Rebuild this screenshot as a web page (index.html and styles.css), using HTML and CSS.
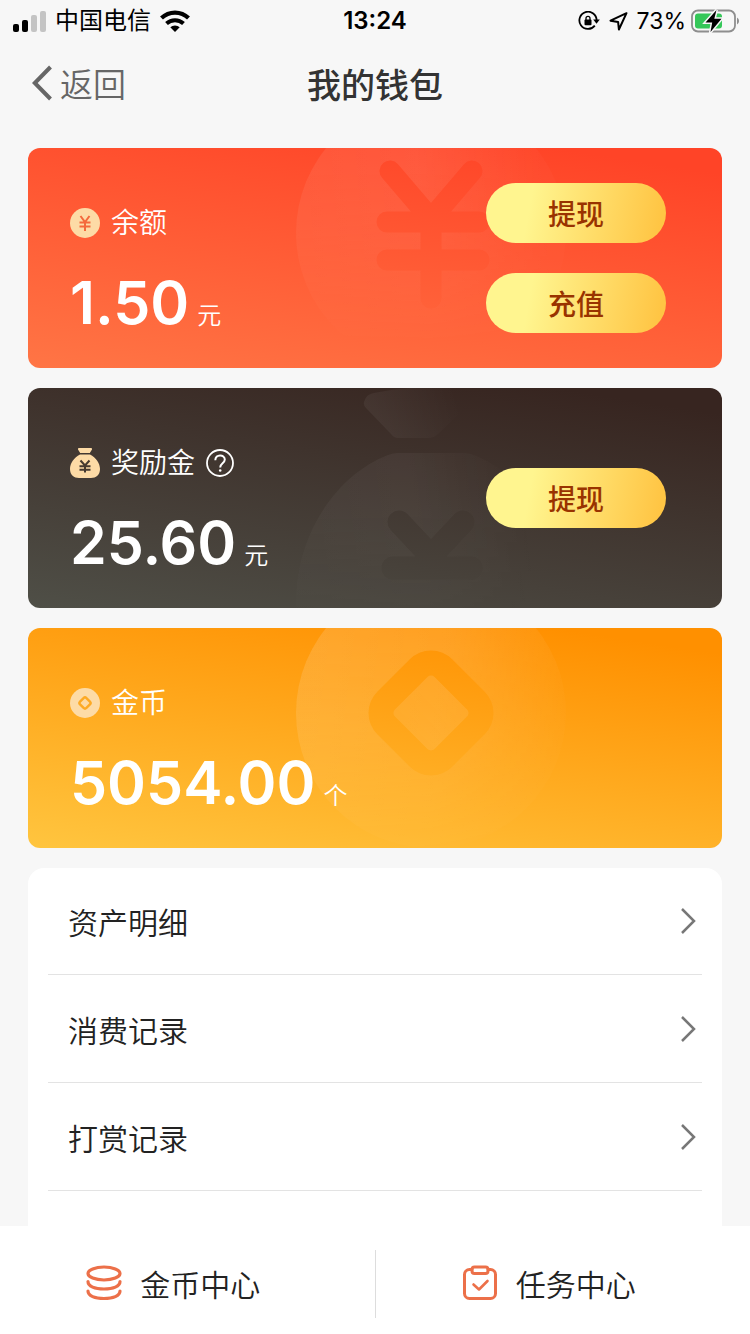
FILE: index.html
```html
<!DOCTYPE html>
<html lang="zh-CN">
<head>
<meta charset="utf-8">
<meta name="viewport" content="width=device-width, initial-scale=1">
<title>我的钱包</title>
<link rel="stylesheet" href="styles.css">
</head>
<body>
<div class="app">
  <div class="status">
    <div class="status-side">
      <svg class="signal" width="34" height="22" viewBox="0 0 34 22" aria-hidden="true">
        <rect x="1" y="14" width="6" height="8" rx="2"/>
        <rect x="10" y="10" width="6" height="12" rx="2"/>
        <rect x="19" y="5" width="6" height="17" rx="2" fill="#c4c4c4"/>
        <rect x="28" y="1" width="6" height="21" rx="2" fill="#c4c4c4"/>
      </svg>
      <span class="carrier">中国电信</span>
      <svg class="wifi" width="30" height="22" viewBox="0 0 30 22" fill="none" stroke="#000" aria-hidden="true">
        <path d="M1.500 8a19.500 19.500 0 0 1 27 0" stroke-width="4.200"/>
        <path d="M6.500 13.500a12.500 12.500 0 0 1 17 0" stroke-width="4"/>
        <path d="M10.300 17.300a6.800 6.800 0 0 1 9.400 0L15 22z" fill="#000" stroke="none"/>
      </svg>
    </div>
    <time class="clock">13:24</time>
    <div class="status-side status-right">
      <svg width="22" height="20" viewBox="0 0 22 20" aria-hidden="true">
        <path d="M16.800 14.600a8.600 8.600 0 1 1 1.800-5.100" fill="none" stroke="#000" stroke-width="1.800"/>
        <path d="M15.200 8.600h6.600l-3.300 4.200z"/>
        <rect x="6.500" y="8.500" width="7" height="5.800" rx="1"/>
        <path d="M8 9V7.300a2 2 0 0 1 4 0V9" fill="none" stroke="#000" stroke-width="1.300"/>
      </svg>
      <svg class="locate" width="19" height="19" viewBox="0 0 19 19" fill="none" stroke="#000" stroke-width="2" stroke-linejoin="round" aria-hidden="true">
        <path d="M17.500 1.200 1.500 8.700l7.600 1.200.8 7.600z"/>
      </svg>
      <span class="percent">73%</span>
      <svg class="battery" width="49" height="24" viewBox="0 0 49 24" aria-hidden="true">
        <rect x="1" y="1.500" width="43" height="21" rx="6" fill="none" stroke="#8e8e8e" stroke-width="1.800"/>
        <rect x="4" y="4.500" width="27" height="15" rx="3" fill="#35c759"/>
        <path d="M46 8.500a4 4 0 0 1 0 7z" fill="#8e8e8e"/>
        <path class="bolt" d="M25.500 1 14.500 13.500h6.700L19.500 23 30.500 9.800h-7.200z"/>
      </svg>
    </div>
  </div>

  <header class="nav">
    <button class="back" type="button">
      <svg width="20" height="36" viewBox="0 0 20 36" fill="none" stroke="#666" stroke-width="4" aria-hidden="true"><path d="M18.500 2 2.800 18l15.700 16"/></svg>
      <span>返回</span>
    </button>
    <h1 class="title">我的钱包</h1>
  </header>

  <main class="content">
    <section class="card card-balance">
      <svg class="art" viewBox="0 0 694 220" aria-hidden="true">
        <defs>
          <linearGradient id="fade" gradientUnits="userSpaceOnUse" x1="270" y1="100" x2="520" y2="80">
            <stop offset="0" stop-color="#fff" stop-opacity=".07"/>
            <stop offset=".5" stop-color="#fff" stop-opacity=".09"/>
            <stop offset="1" stop-color="#fff" stop-opacity=".02"/>
          </linearGradient>
          <linearGradient id="fade-low" gradientUnits="userSpaceOnUse" x1="340" y1="20" x2="340" y2="200">
            <stop offset="0" stop-color="#fff"/>
            <stop offset=".3" stop-color="#fff" stop-opacity=".8"/>
            <stop offset="1" stop-color="#fff" stop-opacity="0"/>
          </linearGradient>
          <mask id="yen-hole" maskUnits="userSpaceOnUse" x="0" y="-60" width="694" height="300">
            <rect y="-60" width="694" height="300" fill="url(#fade-low)"/>
            <path d="m362 23 41 48 41-48M359 74h92M359 112h92M403 74v76" fill="none" stroke="#000" stroke-width="21" stroke-linecap="round" stroke-linejoin="round"/>
          </mask>
        </defs>
        <circle cx="403" cy="85" r="135" fill="url(#fade)" mask="url(#yen-hole)"/>
      </svg>
      <div class="info">
        <h2 class="label">
          <svg width="30" height="30" viewBox="0 0 30 30" aria-hidden="true">
            <circle cx="15" cy="15" r="15" fill="#fddba6"/>
            <path d="m10.500 8 4.500 6 4.500-6M9.500 14.500h11M9.500 18.500h11M15 14v9" fill="none" stroke="#f4693c" stroke-width="2"/>
          </svg>
          余额
        </h2>
        <p class="amount">1.50<span class="unit">元</span></p>
      </div>
      <div class="actions">
        <button class="pill" type="button">提现</button>
        <button class="pill" type="button">充值</button>
      </div>
    </section>

    <section class="card card-bonus">
      <svg class="art" viewBox="0 0 694 220" aria-hidden="true">
        <defs>
          <linearGradient id="bag-fade" gradientUnits="userSpaceOnUse" x1="270" y1="150" x2="500" y2="120">
            <stop offset="0" stop-color="#fff" stop-opacity=".03"/>
            <stop offset=".5" stop-color="#fff" stop-opacity=".045"/>
            <stop offset="1" stop-color="#fff" stop-opacity="0"/>
          </linearGradient>
          <linearGradient id="knot-fade" gradientUnits="userSpaceOnUse" x1="345" y1="35" x2="430" y2="10">
            <stop offset="0" stop-color="#fff" stop-opacity=".05"/>
            <stop offset="1" stop-color="#fff" stop-opacity="0"/>
          </linearGradient>
          <linearGradient id="bag-low" gradientUnits="userSpaceOnUse" x1="340" y1="60" x2="340" y2="220">
            <stop offset="0" stop-color="#fff"/>
            <stop offset=".4" stop-color="#fff"/>
            <stop offset="1" stop-color="#fff" stop-opacity=".2"/>
          </linearGradient>
          <mask id="bag-hole" maskUnits="userSpaceOnUse" x="0" y="0" width="694" height="240">
            <rect width="694" height="240" fill="url(#bag-low)"/>
            <path d="m371 134 32 34 32-34M365 180h78" fill="none" stroke="#000" stroke-width="23" stroke-linecap="round" stroke-linejoin="round"/>
          </mask>
        </defs>
        <path d="M336 14q2-8 10-9 42-9 112-5l-48 46q-4 4-10 4h-30q-4 0-7-4l-25-26q-3-3-2-6z" fill="url(#knot-fade)"/>
        <path d="M268 220c-2-72 40-133 92-153q5-2 10-2h66q5 0 10 2c52 20 93 81 91 153z" fill="url(#bag-fade)" mask="url(#bag-hole)"/>
      </svg>
      <div class="info">
        <h2 class="label">
          <svg width="30" height="30" viewBox="0 0 30 30" aria-hidden="true">
            <path d="M8 1.500C7.500.4 8.500 0 10 0h10c1.500 0 2.500.4 2 1.500L19.800 5h-9.600zM10 6.500h10c6 3 10 9 10 14.500 0 6-4 9-9 9H9c-5 0-9-3-9-9C0 15.500 4 9.500 10 6.500z" fill="#fddba6"/>
            <path d="m10.500 12.500 4.500 5 4.500-5M9.500 18.300h11M9.500 21.800h11M15 17v7.500" fill="none" stroke="#453a30" stroke-width="2"/>
          </svg>
          奖励金
          <button class="help" type="button" aria-label="奖励金说明">
            <svg width="28" height="28" viewBox="0 0 28 28" fill="none" stroke="#fff" stroke-width="1.800" aria-hidden="true">
              <circle cx="14" cy="14" r="13"/>
              <path d="M9.300 11.200C9.300 4.800 18.800 5 18.800 10.600c0 3.700-4.600 3.700-4.600 7.800" stroke-width="2"/>
              <circle cx="14.200" cy="21.500" r="1.300" fill="#fff" stroke="none"/>
            </svg>
          </button>
        </h2>
        <p class="amount">25.60<span class="unit">元</span></p>
      </div>
      <div class="actions">
        <button class="pill" type="button">提现</button>
      </div>
    </section>

    <section class="card card-coins">
      <svg class="art" viewBox="0 0 694 220" aria-hidden="true">
        <defs>
          <linearGradient id="coin-fade" gradientUnits="userSpaceOnUse" x1="290" y1="60" x2="540" y2="90">
            <stop offset="0" stop-color="#fff" stop-opacity=".14"/>
            <stop offset=".5" stop-color="#fff" stop-opacity=".12"/>
            <stop offset="1" stop-color="#fff" stop-opacity=".02"/>
          </linearGradient>
          <linearGradient id="coin-low" gradientUnits="userSpaceOnUse" x1="340" y1="20" x2="340" y2="220">
            <stop offset="0" stop-color="#fff"/>
            <stop offset=".4" stop-color="#fff" stop-opacity=".8"/>
            <stop offset="1" stop-color="#fff" stop-opacity=".1"/>
          </linearGradient>
          <mask id="coin-hole" maskUnits="userSpaceOnUse" x="0" y="-60" width="694" height="300">
            <rect y="-60" width="694" height="300" fill="url(#coin-low)"/>
            <rect x="350" y="32" width="106" height="106" rx="30" fill="#000" transform="rotate(45 403 85)"/>
            <rect x="375" y="57" width="56" height="56" rx="5" fill="url(#coin-low)" transform="rotate(45 403 85)"/>
          </mask>
        </defs>
        <circle cx="403" cy="85" r="135" fill="url(#coin-fade)" mask="url(#coin-hole)"/>
      </svg>
      <div class="info">
        <h2 class="label">
          <svg width="30" height="30" viewBox="0 0 30 30" aria-hidden="true">
            <circle cx="15" cy="15" r="15" fill="#fddba6"/>
            <rect x="10.500" y="10.500" width="9" height="9" rx="2" fill="none" stroke="#fdaa24" stroke-width="2.400" transform="rotate(45 15 15)"/>
          </svg>
          金币
        </h2>
        <p class="amount">5054.00<span class="unit">个</span></p>
      </div>
    </section>

    <nav class="list">
      <a class="row" href="#assets">资产明细<svg width="16" height="26" viewBox="0 0 16 26" class="chevron" aria-hidden="true"><path d="m2 1 12 12L2 25"/></svg></a>
      <a class="row" href="#spending">消费记录<svg width="16" height="26" viewBox="0 0 16 26" class="chevron" aria-hidden="true"><path d="m2 1 12 12L2 25"/></svg></a>
      <a class="row" href="#rewards">打赏记录<svg width="16" height="26" viewBox="0 0 16 26" class="chevron" aria-hidden="true"><path d="m2 1 12 12L2 25"/></svg></a>
    </nav>
  </main>

  <footer class="tabs">
    <a class="tab" href="#coins">
      <svg width="36" height="36" viewBox="0 0 36 36" fill="none" stroke="#ec7049" stroke-width="3.200" stroke-linecap="round" aria-hidden="true">
        <ellipse cx="18" cy="8.500" rx="16" ry="6.500"/>
        <path d="M2 16.500c0 5 7 7.500 16 7.500s16-2.500 16-7.500M2 26c0 5 7 7.500 16 7.500s16-2.500 16-7.500"/>
      </svg>
      金币中心
    </a>
    <a class="tab" href="#tasks">
      <svg width="36" height="36" viewBox="0 0 36 36" fill="none" stroke="#ec7049" stroke-width="3" stroke-linecap="round" stroke-linejoin="round" aria-hidden="true">
        <path d="M10 4.500H7.500a5 5 0 0 0-5 5v19a5 5 0 0 0 5 5h21a5 5 0 0 0 5-5v-19a5 5 0 0 0-5-5H26"/>
        <rect x="10" y="2" width="16" height="6.500" rx="2.500"/>
        <path d="m11.500 19.500 5.500 5 8.500-8.500" stroke-width="2.600"/>
      </svg>
      任务中心
    </a>
  </footer>
</div>
</body>
</html>
```
FILE: styles.css
```css
* {
  box-sizing: border-box;
}

body {
  margin: 0;
  background: #f7f7f7;
  color: #222;
  font-family: Inter, "Noto Sans CJK SC", sans-serif;
}

h1,
h2,
p {
  margin: 0;
}

button {
  padding: 0;
  border: 0;
  background: none;
  font-family: inherit;
  cursor: pointer;
}

a {
  color: inherit;
  text-decoration: none;
}

svg {
  display: block;
  flex: none;
}

.app {
  display: flex;
  flex-direction: column;
  height: 100vh;
  overflow: hidden;
}

.status {
  display: grid;
  grid-template-columns: 1fr auto 1fr;
  align-items: center;
  flex: none;
  height: 40px;
  padding: 2px 12px 0;
  color: #000;
  font-size: 24px;
  line-height: 38px;
}

.status-side {
  display: flex;
  align-items: center;
  gap: 9px;
}

.status-right {
  justify-content: flex-end;
  margin-right: -2px;
}

.percent {
  margin-right: -4px;
  font-size: 23px;
}

.bolt {
  stroke: #f7f7f7;
  stroke-width: 3;
  paint-order: stroke;
}

.clock {
  font-weight: 600;
}

.nav {
  display: grid;
  grid-template-columns: 1fr auto 1fr;
  align-items: center;
  flex: none;
  height: 88px;
  padding: 0 32px 2px;
}

.back {
  display: flex;
  align-items: center;
  gap: 8px;
  color: #666;
  font-size: 33px;
  font-weight: 350;
}

.title {
  color: #333;
  font-size: 34px;
  font-weight: 500;
}

.content {
  display: flex;
  flex: 1;
  flex-direction: column;
  gap: 20px;
  min-height: 0;
  padding: 20px 28px 0;
}

.card {
  position: relative;
  display: flex;
  align-items: center;
  justify-content: space-between;
  flex: none;
  min-height: 220px;
  padding: 20px 56px 20px 42px;
  border-radius: 12px;
  color: #fff;
  overflow: hidden;
}

.card-balance {
  background: linear-gradient(9deg, #ff7545, #ff4427 92%);
}

.card-bonus {
  background: linear-gradient(9deg, #4f4f47, #372520 92%);
}

.card-coins {
  background: linear-gradient(9deg, #ffc53f, #ff9000 92%);
}

.art {
  position: absolute;
  inset: 0;
  width: 100%;
  height: 100%;
}

.info,
.actions {
  position: relative;
  display: flex;
  flex-direction: column;
}

.info {
  gap: 24px;
  padding-top: 26px;
}

.actions {
  gap: 30px;
}

.label {
  display: flex;
  align-items: center;
  gap: 11px;
  font-size: 28px;
  font-weight: 350;
  line-height: 40px;
}

.amount {
  display: flex;
  align-items: baseline;
  gap: 8px;
  font-size: 59px;
  font-weight: 600;
  line-height: 72px;
}

.unit {
  font-size: 24px;
  font-weight: 350;
  line-height: 24px;
}

.pill {
  width: 180px;
  height: 60px;
  border-radius: 30px;
  background: linear-gradient(100deg, #fff58f 25%, #ffc544 95%);
  color: #993300;
  font-size: 28px;
  font-weight: 500;
}

.list {
  flex: 1 0 auto;
  padding: 0 20px;
  border-radius: 16px 16px 0 0;
  background: #fff;
}

.row {
  display: flex;
  align-items: center;
  justify-content: space-between;
  height: 108px;
  padding: 0 6px 0 20px;
  border-bottom: 1px solid #e3e3e3;
  font-size: 30px;
  font-weight: 350;
}

.row:first-child {
  height: 107px;
}

.chevron {
  fill: none;
  stroke: #777;
  stroke-width: 2.5;
}

.tabs {
  position: relative;
  display: flex;
  flex: none;
  padding: 24px 0 16px;
  background: #fff;
}

.tab {
  display: flex;
  flex: 1;
  align-items: center;
  justify-content: center;
  gap: 18px;
  height: 68px;
  padding: 0 28px 2px 0;
  font-size: 30px;
  font-weight: 350;
}

.tab + .tab {
  border-left: 1px solid #ddd;
}
```
